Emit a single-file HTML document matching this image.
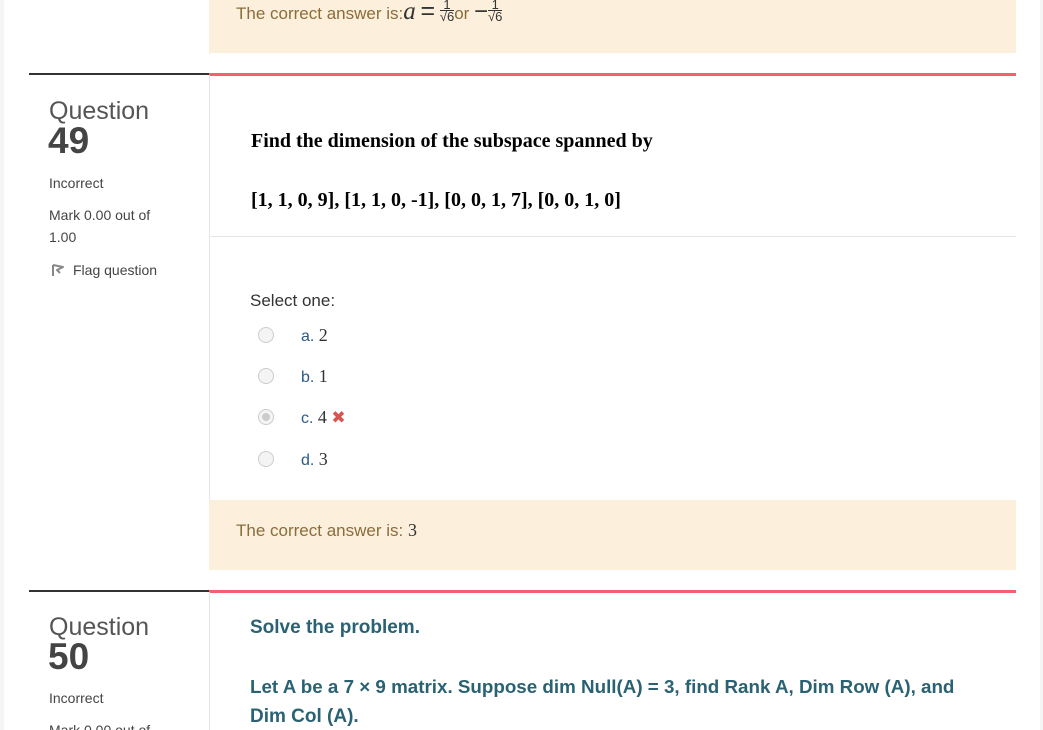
<!DOCTYPE html>
<html><head><meta charset="utf-8"><style>
*{margin:0;padding:0;box-sizing:border-box}
html,body{width:1043px;height:730px;overflow:hidden}
body{background:#f5f5f5;position:relative;font-family:"Liberation Sans",sans-serif}
.page{position:absolute;left:4px;top:0;width:1036px;height:730px;background:#fff}
.a{position:absolute;white-space:nowrap}
.fb{background:#fcefdc;position:absolute;left:209px;width:807px}
.vl{position:absolute;left:209px;width:1px;background:#e5e5e5}
.radio{position:absolute;left:258px;width:16px;height:16px;border-radius:50%;border:1px solid #ccc;background:#f4f4f4}
.opt{position:absolute;left:301px;font-size:18px;color:#333;font-family:"Liberation Serif",serif}
.opt span{font-family:"Liberation Sans",sans-serif;color:#2a5a86;font-size:16px}
.fr{display:inline-block;text-align:center;font-size:13px;color:#333;line-height:11px;vertical-align:-2px}
</style></head><body>
<div class="page"></div>
<div class="vl" style="top:0;height:54px"></div>
<div class="fb" style="top:0;height:53px"></div>
<div class="a" style="left:236px;top:-3px;font-size:17px;color:#8a6d3b">The correct answer is:<i style="font-family:'Liberation Serif',serif;font-size:25px;color:#333">a</i> <span style="font-size:25px;color:#333">=</span> <span class="fr"><span style="display:block;border-bottom:1px solid #333">1</span>√6</span>or <span style="font-size:24px;color:#333">−</span><span class="fr"><span style="display:block;border-bottom:1px solid #333">1</span>√6</span></div>

<div style="position:absolute;left:29px;top:73px;width:180px;height:2px;background:#333"></div>
<div style="position:absolute;left:209px;top:73px;width:807px;height:3px;background:#f4606c"></div>
<div class="vl" style="top:75px;height:495px"></div>
<div class="a" style="left:49px;top:96px;font-size:25px;color:#555;line-height:30px">Question</div>
<div class="a" style="left:48px;top:122px;font-size:37px;font-weight:bold;color:#444;line-height:38px">49</div>
<div class="a" style="left:49px;top:175px;font-size:14px;color:#444">Incorrect</div>
<div class="a" style="left:49px;top:207px;font-size:14px;color:#444">Mark 0.00 out of</div>
<div class="a" style="left:49px;top:229px;font-size:14px;color:#444">1.00</div>
<svg class="a" style="left:51px;top:263px" width="14" height="14" viewBox="0 0 14 14"><path d="M2 2 L2 13 M2 2 L12 4 L6 7 L9 10" stroke="#888" stroke-width="2" fill="none" stroke-linejoin="round"/></svg>
<div class="a" style="left:73px;top:262px;font-size:14px;color:#444">Flag question</div>

<div class="a" style="left:251px;top:130px;font-family:'Liberation Serif',serif;font-weight:bold;font-size:20px;color:#000">Find the dimension of the subspace spanned by</div>
<div class="a" style="left:251px;top:189px;font-family:'Liberation Serif',serif;font-weight:bold;font-size:20px;color:#000">[1, 1, 0, 9], [1, 1, 0, -1], [0, 0, 1, 7], [0, 0, 1, 0]</div>
<div style="position:absolute;left:209px;top:236px;width:807px;height:1px;background:#e5e5e5"></div>
<div class="a" style="left:250px;top:291px;font-size:17px;color:#333">Select one:</div>
<div class="radio" style="top:327px"></div><div class="opt" style="top:325px"><span>a. </span>2</div>
<div class="radio" style="top:368px"></div><div class="opt" style="top:366px"><span>b. </span>1</div>
<div class="radio" style="top:409px"><div style="position:absolute;left:3px;top:3px;width:8px;height:8px;border-radius:50%;background:#ccc"></div></div><div class="opt" style="top:407px"><span>c. </span>4 <b style="font-family:'DejaVu Sans',sans-serif;color:#d9534f;font-size:17px">✖</b></div>
<div class="radio" style="top:451px"></div><div class="opt" style="top:449px"><span>d. </span>3</div>
<div class="fb" style="top:500px;height:70px"></div>
<div class="a" style="left:236px;top:520px;font-size:17px;color:#8a6d3b">The correct answer is: <span style="font-family:'Liberation Serif',serif;color:#333;font-size:18px">3</span></div>

<div style="position:absolute;left:29px;top:590px;width:180px;height:2px;background:#333"></div>
<div style="position:absolute;left:209px;top:590px;width:807px;height:3px;background:#f4606c"></div>
<div class="vl" style="top:592px;height:140px"></div>
<div class="a" style="left:49px;top:612px;font-size:25px;color:#555;line-height:30px">Question</div>
<div class="a" style="left:48px;top:638px;font-size:37px;font-weight:bold;color:#444;line-height:38px">50</div>
<div class="a" style="left:49px;top:690px;font-size:14px;color:#444">Incorrect</div>
<div class="a" style="left:49px;top:722px;font-size:14px;color:#444">Mark 0.00 out of</div>
<div class="a" style="left:250px;top:617px;font-size:19px;font-weight:bold;color:#2a6273">Solve the problem.</div>
<div class="a" style="left:250px;top:676px;font-size:18.8px;font-weight:bold;color:#2a6273">Let A be a 7 × 9 matrix. Suppose dim Null(A) = 3, find Rank A, Dim Row (A), and</div>
<div class="a" style="left:250px;top:706px;font-size:19px;font-weight:bold;color:#2a6273">Dim Col (A).</div>
</body></html>
